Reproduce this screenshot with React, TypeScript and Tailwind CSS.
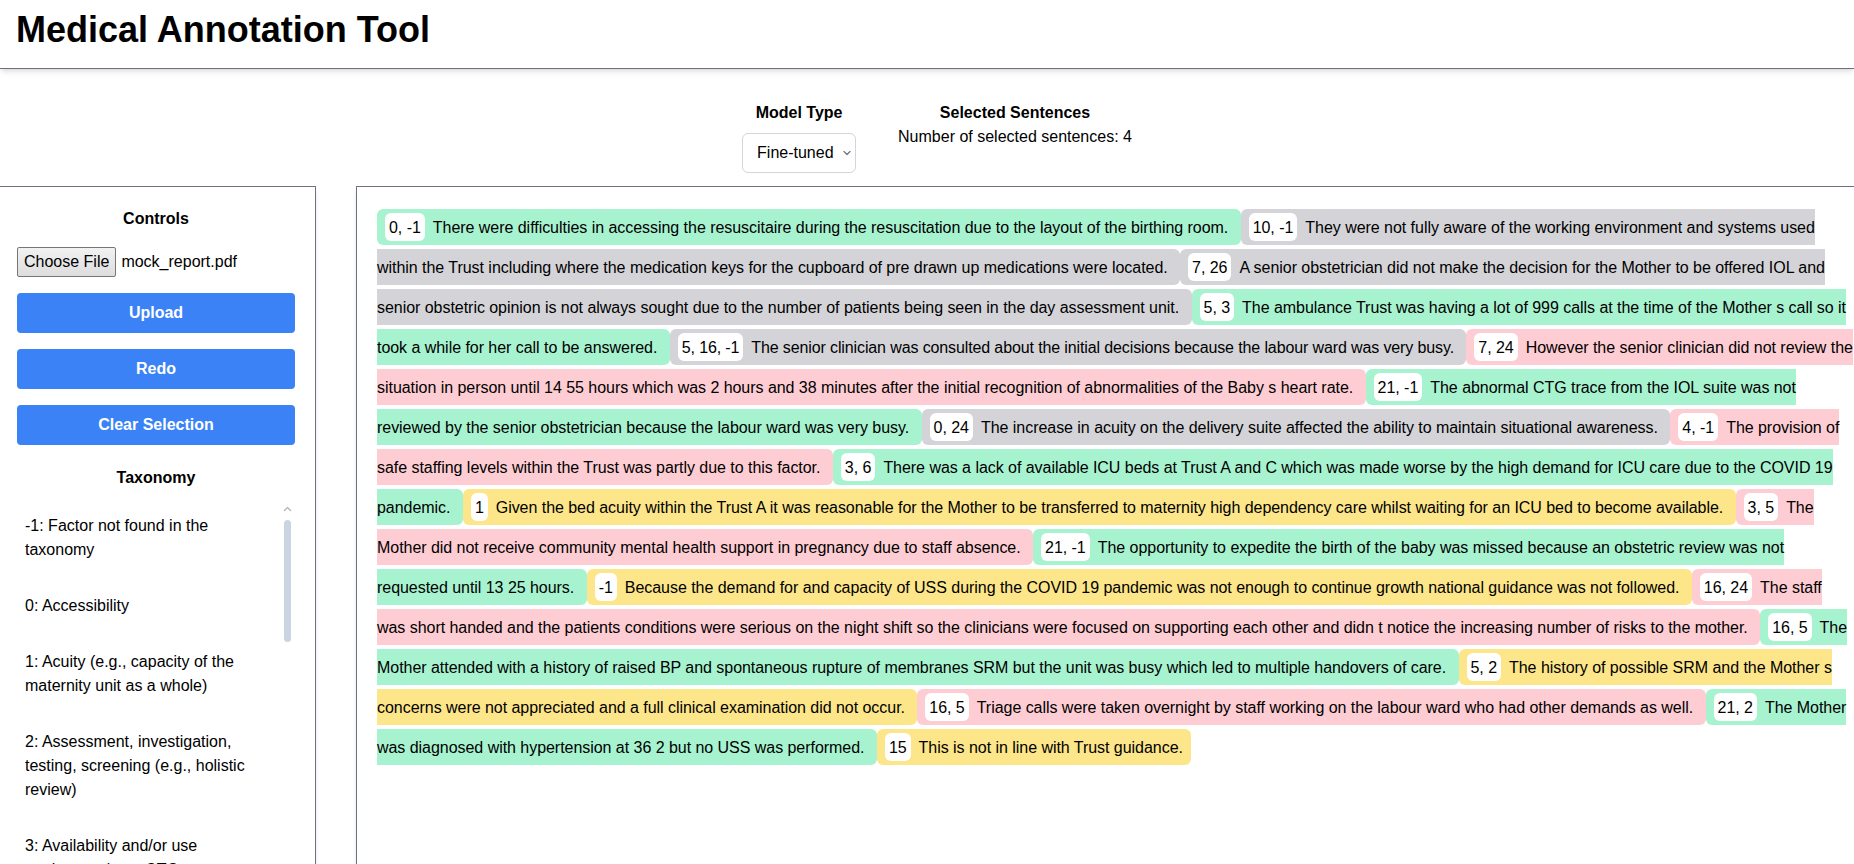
type Tone = 'green' | 'gray' | 'pink' | 'yellow';

type Sentence = { labels: string; text: string; tone: Tone; tight?: boolean };

const toneBg: Record<Tone, string> = {
  green: 'bg-[#a7f3d0]',
  gray: 'bg-[#d4d4d8]',
  pink: 'bg-[#fecdd3]',
  yellow: 'bg-[#fde68a]',
};

const sentences: Sentence[] = [
  { labels: '0, -1', tone: 'green', text: 'There were difficulties in accessing the resuscitaire during the resuscitation due to the layout of the birthing room.' },
  { labels: '10, -1', tone: 'gray', text: 'They were not fully aware of the working environment and systems used within the Trust including where the medication keys for the cupboard of pre drawn up medications were located.' },
  { labels: '7, 26', tone: 'gray', text: 'A senior obstetrician did not make the decision for the Mother to be offered IOL and senior obstetric opinion is not always sought due to the number of patients being seen in the day assessment unit.' },
  { labels: '5, 3', tone: 'green', text: 'The ambulance Trust was having a lot of 999 calls at the time of the Mother s call so it took a while for her call to be answered.' },
  { labels: '5, 16, -1', tone: 'gray', tight: true, text: 'The senior clinician was consulted about the initial decisions because the labour ward was very busy.' },
  { labels: '7, 24', tone: 'pink', text: 'However the senior clinician did not review the situation in person until 14 55 hours which was 2 hours and 38 minutes after the initial recognition of abnormalities of the Baby s heart rate.' },
  { labels: '21, -1', tone: 'green', text: 'The abnormal CTG trace from the IOL suite was not reviewed by the senior obstetrician because the labour ward was very busy.' },
  { labels: '0, 24', tone: 'gray', text: 'The increase in acuity on the delivery suite affected the ability to maintain situational awareness.' },
  { labels: '4, -1', tone: 'pink', text: 'The provision of safe staffing levels within the Trust was partly due to this factor.' },
  { labels: '3, 6', tone: 'green', text: 'There was a lack of available ICU beds at Trust A and C which was made worse by the high demand for ICU care due to the COVID 19 pandemic.' },
  { labels: '1', tone: 'yellow', text: 'Given the bed acuity within the Trust A it was reasonable for the Mother to be transferred to maternity high dependency care whilst waiting for an ICU bed to become available.' },
  { labels: '3, 5', tone: 'pink', text: 'The Mother did not receive community mental health support in pregnancy due to staff absence.' },
  { labels: '21, -1', tone: 'green', text: 'The opportunity to expedite the birth of the baby was missed because an obstetric review was not requested until 13 25 hours.' },
  { labels: '-1', tone: 'yellow', text: 'Because the demand for and capacity of USS during the COVID 19 pandemic was not enough to continue growth national guidance was not followed.' },
  { labels: '16, 24', tone: 'pink', text: 'The staff was short handed and the patients conditions were serious on the night shift so the clinicians were focused on supporting each other and didn t notice the increasing number of risks to the mother.' },
  { labels: '16, 5', tone: 'green', text: 'The Mother attended with a history of raised BP and spontaneous rupture of membranes SRM but the unit was busy which led to multiple handovers of care.' },
  { labels: '5, 2', tone: 'yellow', text: 'The history of possible SRM and the Mother s concerns were not appreciated and a full clinical examination did not occur.' },
  { labels: '16, 5', tone: 'pink', text: 'Triage calls were taken overnight by staff working on the labour ward who had other demands as well.' },
  { labels: '21, 2', tone: 'green', text: 'The Mother was diagnosed with hypertension at 36 2 but no USS was performed.' },
  { labels: '15', tone: 'yellow', text: 'This is not in line with Trust guidance.' },
];

const taxonomy = [
  '-1: Factor not found in the taxonomy',
  '0: Accessibility',
  '1: Acuity (e.g., capacity of the maternity unit as a whole)',
  '2: Assessment, investigation, testing, screening (e.g., holistic review)',
  '3: Availability and/or use equipment (e.g., CTG, resuscitaire)',
  '4: Staffing levels and skill mix',
  '5: Communication between staff (e.g., handover)',
  '6: Capacity and demand on external services',
  '7: Escalation and senior review',
  '8: Policies, procedures and guidelines',
  '9: Documentation and record keeping',
  '10: Knowledge of the working environment',
  '11: Training and competence',
  '12: Teamwork and leadership',
  '13: Risk assessment',
  '14: Monitoring (e.g., fetal heart rate)',
  '15: Adherence to national and local guidance',
  '16: Workload and fatigue',
  '17: Interpretation of results',
  '18: Referral pathways',
  '19: Patient factors',
  '20: Language and interpreting',
  '21: Delay in care or treatment',
  '22: Environment and layout',
  '23: Information technology',
  '24: Situational awareness',
  '25: Consent and shared decision making',
  '26: Senior obstetric input',
];

function ChevronDown() {
  return (
    <svg width="10" height="10" viewBox="0 0 10 10" fill="none" aria-hidden="true">
      <path d="M2 3.5 5 6.5 8 3.5" stroke="#6b7280" strokeWidth="1.2" strokeLinecap="round" strokeLinejoin="round" />
    </svg>
  );
}

function ChevronUp() {
  return (
    <svg width="9" height="6" viewBox="0 0 9 6" fill="none" aria-hidden="true">
      <path d="M1.5 4.5 4.5 1.5 7.5 4.5" stroke="#b4b4b4" strokeWidth="1.3" strokeLinecap="round" strokeLinejoin="round" />
    </svg>
  );
}

function SentenceSpan({ s }: { s: Sentence }) {
  return (
    <span className={`rounded-md px-2 py-[9.5px] ${toneBg[s.tone]} ${s.tight ? 'tracking-[-0.12px]' : ''}`}>
      <span className="mr-2 rounded-md bg-white px-1 py-[5.5px] whitespace-nowrap">{s.labels}</span>
      {s.text + ' '}
    </span>
  );
}

export default function App() {
  return (
    <div className="min-h-screen overflow-hidden bg-white font-['Liberation_Sans',Arial,sans-serif] text-base text-black">
      <header className="relative z-10 h-[69px] border-b border-gray-500 bg-white px-4 pt-[10px] shadow-md">
        <h1 className="text-[36px] leading-[40px] font-bold">Medical Annotation Tool</h1>
      </header>

      <div className="flex justify-center gap-[42px] pt-8 pb-[13px] pl-5">
        <div className="flex flex-col items-center">
          <div className="leading-6 font-bold">Model Type</div>
          <div className="relative mt-2">
            <select
              defaultValue="fine-tuned"
              className="h-10 w-[114px] appearance-none rounded-md border border-gray-300 bg-white pl-[14px] text-base"
            >
              <option value="fine-tuned">Fine-tuned</option>
              <option value="base">Base</option>
            </select>
            <span className="pointer-events-none absolute top-[15px] right-[4px]">
              <ChevronDown />
            </span>
          </div>
        </div>
        <div className="flex flex-col items-center leading-6">
          <div className="font-bold">Selected Sentences</div>
          <div>Number of selected sentences: 4</div>
        </div>
      </div>

      <div className="flex min-h-[700px] gap-10">
        <aside className="w-[316px] shrink-0 border-t border-r border-gray-500 pt-5 pr-5 pl-[17px] shadow-md">
          <h2 className="text-center leading-6 font-bold">Controls</h2>
          <div className="mt-4 flex items-center">
            <button className="h-[30px] rounded-[2px] border border-[#767676] bg-gradient-to-b from-[#f2f2f2] to-[#dddddd] px-[6px]">
              Choose File
            </button>
            <span className="ml-[5px]">mock_report.pdf</span>
          </div>
          <button className="mt-4 h-10 w-full rounded bg-[#3b82f6] font-bold text-white">Upload</button>
          <button className="mt-4 h-10 w-full rounded bg-[#3b82f6] font-bold text-white">Redo</button>
          <button className="mt-4 h-10 w-full rounded bg-[#3b82f6] font-bold text-white">Clear Selection</button>
          <h2 className="mt-[21px] mb-2 text-center leading-6 font-bold">Taxonomy</h2>
          <div className="relative max-h-[560px] overflow-hidden">
            <ul>
              {taxonomy.map((t) => (
                <li key={t} className="py-4 pr-[38px] pl-2 leading-6">
                  {t}
                </li>
              ))}
            </ul>
            {/* thin scrollbar */}
            <span className="absolute top-[8px] right-[3px]">
              <ChevronUp />
            </span>
            <span className="absolute top-[22px] right-[4px] h-[122px] w-[7px] rounded-full bg-[#cbd5e1]" />
          </div>
        </aside>

        <main className="flex-1 border-t border-l border-gray-500 pt-5 pl-5 leading-10 tracking-[-0.04px] shadow-md">
          <p>
            {sentences.map((s, i) => (
              <SentenceSpan key={i} s={s} />
            ))}
          </p>
        </main>
      </div>
    </div>
  );
}
